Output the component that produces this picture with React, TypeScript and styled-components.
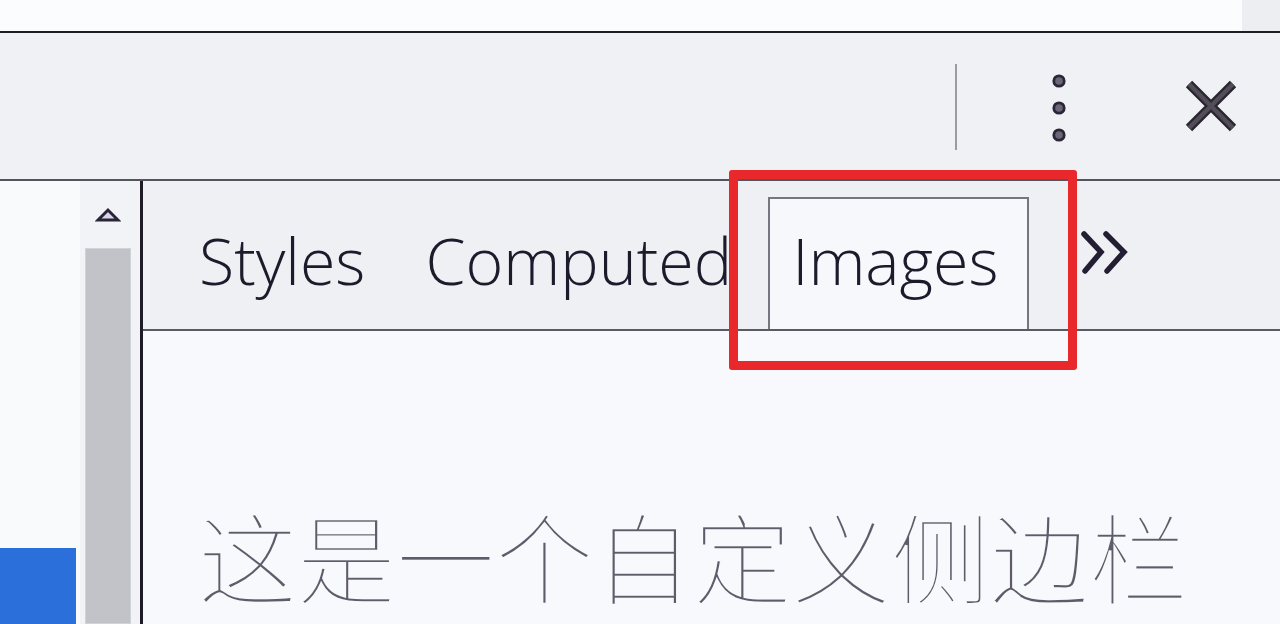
import styled, { createGlobalStyle } from "styled-components";

/**
 * Global
 */

const GlobalStyle = createGlobalStyle`
  html, body {
    margin: 0;
    padding: 0;
    overflow: hidden;
    background: #f7f9fc;
  }
  body {
    font-family: "Open Sans", "Noto Sans", sans-serif;
  }
`;

/**
 * Styled Components
 */

const Page = styled.div`
  display: flex;
  flex-direction: column;
  height: 624px;
  position: relative;
  width: 1280px;
`;

const TopStrip = styled.div`
  background: #fbfcfd;
  border-bottom: 2px solid #1f1d24;
  display: flex;
  height: 31px;
  justify-content: flex-end;
`;

const TopScrollPiece = styled.div`
  background: #eceef1;
  width: 38px;
`;

const Toolbar = styled.div`
  align-items: center;
  background: #eff1f5;
  border-bottom: 2px solid #55535c;
  box-sizing: border-box;
  display: flex;
  height: 148px;
  justify-content: flex-end;
  padding-right: 42px;
`;

const ToolbarSeparator = styled.div`
  align-self: flex-start;
  background: #9c9ba2;
  height: 86px;
  margin-top: 31px;
  width: 2px;
`;

const IconButton = styled.button<{ $gap: number; $shift?: number }>`
  align-items: center;
  background: none;
  border: none;
  display: flex;
  justify-content: center;
  margin-left: ${({ $gap }) => $gap}px;
  margin-top: ${({ $shift = 0 }) => $shift}px;
  padding: 0;
`;

const Body = styled.div`
  display: flex;
  flex: 1;
  min-height: 0;
`;

const LeftPane = styled.div`
  background: #f8fafc;
  display: flex;
  flex-direction: column;
  justify-content: flex-end;
  padding-right: 4px;
  width: 76px;
`;

const SelectedRow = styled.div`
  background: #2a6fda;
  height: 76px;
`;

const ScrollColumn = styled.div`
  background: #f2f3f6;
  display: flex;
  flex-direction: column;
  width: 60px;
`;

const ScrollArrow = styled.div`
  align-items: center;
  display: flex;
  height: 67px;
  justify-content: center;
  padding-right: 4px;
`;

const ScrollThumb = styled.div`
  background: #c2c3c8;
  border: 1px solid #d2d3d7;
  flex: 1;
  margin-left: 5px;
  width: 44px;
`;

const PaneDivider = styled.div`
  background: #1f1c27;
  width: 3px;
`;

const Sidebar = styled.div`
  display: flex;
  flex: 1;
  flex-direction: column;
`;

const TabStrip = styled.div`
  align-items: flex-end;
  background: #eef0f4;
  border-bottom: 2px solid #5b5963;
  box-sizing: border-box;
  display: flex;
  gap: 6px;
  height: 150px;
  padding-left: 32px;
`;

const Tab = styled.div<{ $active?: boolean }>`
  align-items: center;
  background: ${({ $active }) => ($active ? "#f7f8fb" : "transparent")};
  border: 2px solid ${({ $active }) => ($active ? "#77757f" : "transparent")};
  border-bottom: none;
  box-sizing: border-box;
  color: #1d1a2c;
  display: flex;
  font-size: 64.5px;
  font-weight: 300;
  height: 132px;
  padding: 0 28px 8px 22px;
  white-space: nowrap;
`;

const MoreTabs = styled.div`
  align-self: center;
  display: flex;
  margin-left: 44px;
  margin-top: -4px;
`;

const Content = styled.div`
  background: #f7f9fc;
  flex: 1;
  padding: 174px 0 0 55px;
`;

const Placeholder = styled.div`
  -webkit-text-stroke: 2.6px #f7f9fc;
  color: #5f5b6b;
  font-family: "Noto Sans CJK SC", "Noto Sans", sans-serif;
  font-size: 99px;
  font-weight: 300;
  line-height: 1;
  paint-order: fill stroke;
  white-space: nowrap;
`;

const Highlight = styled.div`
  border: 9px solid #e8282b;
  border-radius: 3px;
  box-sizing: border-box;
  height: 200px;
  left: 729px;
  pointer-events: none;
  position: absolute;
  top: 170px;
  width: 348px;
`;

/**
 * Icons
 */

const KebabIcon = () => (
  <svg width="16" height="70" viewBox="0 0 16 70">
    {[8, 35, 62].map((cy) => (
      <circle key={cy} cx="8" cy={cy} r="5.2" fill="#6b6777" stroke="#2a2537" strokeWidth="2.8" />
    ))}
  </svg>
);

const CloseIcon = () => (
  <svg width="54" height="54" viewBox="0 0 54 54">
    <path d="M5 5 L49 49 M49 5 L5 49" stroke="#2a2630" strokeWidth="9" />
    <path d="M5 5 L49 49 M49 5 L5 49" stroke="#524d58" strokeWidth="4.5" />
  </svg>
);

const UpArrowIcon = () => (
  <svg width="26" height="16" viewBox="0 0 26 16">
    <path d="M3 13 L13 3 L23 13 Z" fill="#d9d4ea" stroke="#2a2438" strokeWidth="3" strokeLinejoin="miter" />
  </svg>
);

const ChevronsIcon = () => (
  <svg width="50" height="46" viewBox="0 0 50 46">
    <path d="M5 4 L22 22 L6 41" fill="none" stroke="#231e33" strokeWidth="5.5" strokeLinecap="round" />
    <path d="M27 4 L45 22 L28 41" fill="none" stroke="#231e33" strokeWidth="5.5" strokeLinecap="round" />
  </svg>
);

/**
 * App
 */

const tabs = [
  { label: "Styles", active: false },
  { label: "Computed", active: false },
  { label: "Images", active: true },
];

export default function App() {
  return (
    <Page>
      <GlobalStyle />
      <TopStrip>
        <TopScrollPiece />
      </TopStrip>
      <Toolbar>
        <ToolbarSeparator />
        <IconButton $gap={94} $shift={4} aria-label="More options">
          <KebabIcon />
        </IconButton>
        <IconButton $gap={117} aria-label="Close">
          <CloseIcon />
        </IconButton>
      </Toolbar>
      <Body>
        <LeftPane>
          <SelectedRow />
        </LeftPane>
        <ScrollColumn>
          <ScrollArrow>
            <UpArrowIcon />
          </ScrollArrow>
          <ScrollThumb />
        </ScrollColumn>
        <PaneDivider />
        <Sidebar>
          <TabStrip>
            {tabs.map((tab) => (
              <Tab key={tab.label} $active={tab.active}>
                {tab.label}
              </Tab>
            ))}
            <MoreTabs>
              <ChevronsIcon />
            </MoreTabs>
          </TabStrip>
          <Content>
            <Placeholder>这是一个自定义侧边栏</Placeholder>
          </Content>
        </Sidebar>
      </Body>
      <Highlight />
    </Page>
  );
}
